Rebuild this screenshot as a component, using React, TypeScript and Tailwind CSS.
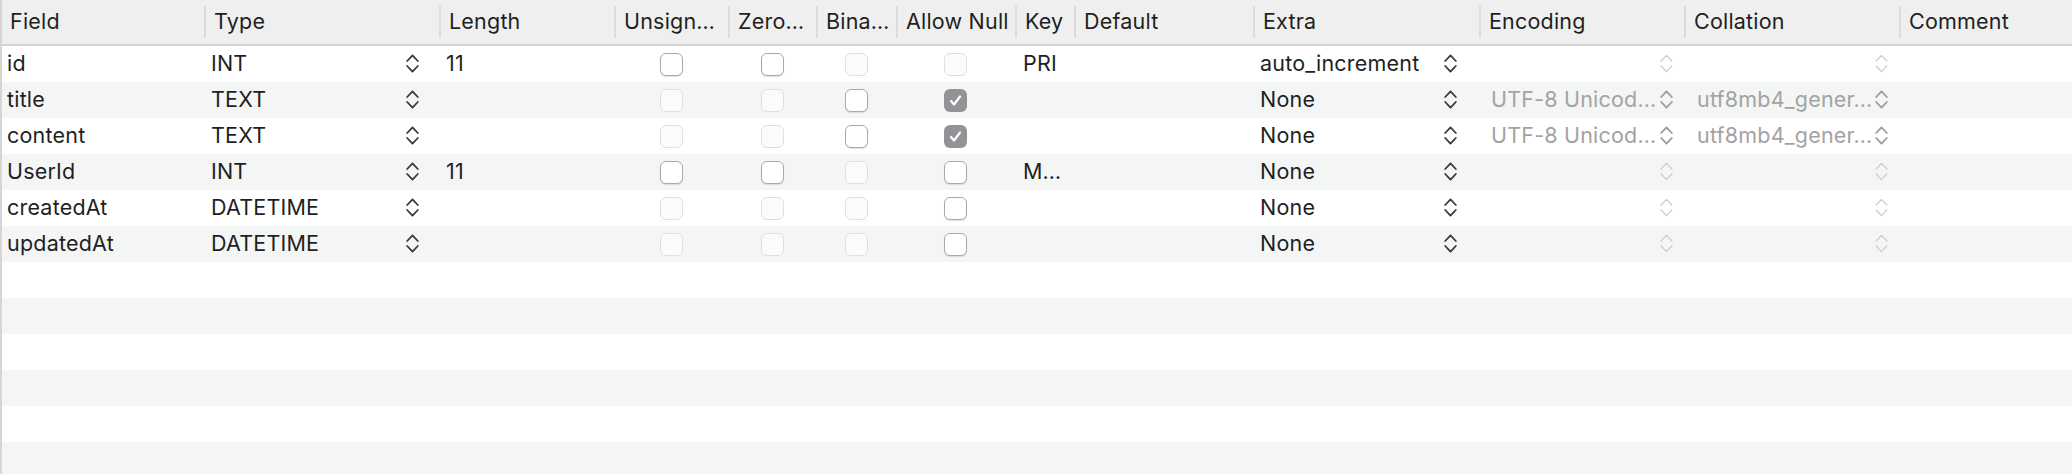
import React from 'react';

type Box = 'on' | 'off' | 'dis' | 'checked';

interface Row {
  field: string;
  type: string;
  length: string;
  unsigned: Box;
  zero: Box;
  binary: Box;
  allowNull: Box;
  key: string;
  extra: string;
  encoded: boolean;
}

const rows: Row[] = [
  { field: 'id', type: 'INT', length: '11', unsigned: 'off', zero: 'off', binary: 'dis', allowNull: 'dis', key: 'PRI', extra: 'auto_increment', encoded: false },
  { field: 'title', type: 'TEXT', length: '', unsigned: 'dis', zero: 'dis', binary: 'off', allowNull: 'checked', key: '', extra: 'None', encoded: true },
  { field: 'content', type: 'TEXT', length: '', unsigned: 'dis', zero: 'dis', binary: 'off', allowNull: 'checked', key: '', extra: 'None', encoded: true },
  { field: 'UserId', type: 'INT', length: '11', unsigned: 'off', zero: 'off', binary: 'dis', allowNull: 'off', key: 'M…', extra: 'None', encoded: false },
  { field: 'createdAt', type: 'DATETIME', length: '', unsigned: 'dis', zero: 'dis', binary: 'dis', allowNull: 'off', key: '', extra: 'None', encoded: false },
  { field: 'updatedAt', type: 'DATETIME', length: '', unsigned: 'dis', zero: 'dis', binary: 'dis', allowNull: 'off', key: '', extra: 'None', encoded: false },
];

const headers = [
  'Field', 'Type', 'Length', 'Unsign…', 'Zero…', 'Bina…', 'Allow Null',
  'Key', 'Default', 'Extra', 'Encoding', 'Collation', 'Comment',
];

const cols =
  'grid grid-cols-[202px_235px_175px_114px_88px_80px_119px_59px_179px_226px_205px_215px_173px]';

function Stepper({ tone = 'dark' }: { tone?: 'dark' | 'gray' | 'faint' }) {
  const color = tone === 'dark' ? '#3a3a3a' : tone === 'gray' ? '#9c9c9c' : '#cdcdcd';
  const width = tone === 'faint' ? 1.3 : 1.8;
  return (
    <svg width="13" height="21" viewBox="0 0 13 21" fill="none" className="shrink-0 -mt-[2px]">
      <polyline points="1.2,8 6.5,2.4 11.8,8" stroke={color} strokeWidth={width} strokeLinecap="round" strokeLinejoin="round" />
      <polyline points="1.2,13 6.5,18.6 11.8,13" stroke={color} strokeWidth={width} strokeLinecap="round" strokeLinejoin="round" />
    </svg>
  );
}

function Check({ state }: { state: Box }) {
  if (state === 'checked') {
    return (
      <div className="w-[23px] h-[23px] rounded-[6px] bg-[#929297] flex items-center justify-center">
        <svg width="15" height="15" viewBox="0 0 15 15" fill="none">
          <polyline points="3,8 6,11.5 12,3.5" stroke="white" strokeWidth="2.2" strokeLinecap="round" strokeLinejoin="round" />
        </svg>
      </div>
    );
  }
  if (state === 'dis') {
    return <div className="w-[23px] h-[23px] rounded-[6px] bg-[#fbfbfb] border border-[#dfdfdf]" />;
  }
  return (
    <div className="w-[23px] h-[23px] rounded-[6px] bg-white border border-[#a9a9a9] shadow-[0_1px_1px_rgba(0,0,0,0.12)]" />
  );
}

export default function App() {
  const empty = Array.from({ length: 6 });

  return (
    <div
      className="w-[2072px] h-[474px] overflow-hidden bg-white border-l-2 border-[#d5d5d5] text-[21.5px] tracking-[0.2px] text-[#1f1f1f]"
      style={{ fontFamily: 'Inter, "Liberation Sans", sans-serif' }}
    >
      {/* Header */}
      <div className={`${cols} h-[46px] bg-[#efefef] border-b-2 border-[#d3d3d3]`}>
        {headers.map((h, i) => (
          <div key={h} className="flex items-center h-[44px] overflow-hidden whitespace-nowrap">
            {i > 0 && <div className="w-[2px] h-[32px] bg-[#dcdcdc] shrink-0" />}
            <span className="pl-[8px] -mt-[1px]">{h}</span>
          </div>
        ))}
      </div>

      {/* Rows */}
      {rows.map((r, i) => (
        <div key={r.field} className={`${cols} h-[36px] ${i % 2 ? 'bg-[#f4f5f5]' : 'bg-white'}`}>
          <div className="flex items-center pl-[5px] pb-[2px]">{r.field}</div>
          <div className="flex items-center justify-between pl-[7px] pr-[20px]">
            <span className="pb-[2px]">{r.type}</span>
            <Stepper />
          </div>
          <div className="flex items-center pl-[7px] pb-[2px]">{r.length}</div>
          <div className="flex items-center justify-center"><Check state={r.unsigned} /></div>
          <div className="flex items-center justify-center"><Check state={r.zero} /></div>
          <div className="flex items-center justify-center"><Check state={r.binary} /></div>
          <div className="flex items-center justify-center"><Check state={r.allowNull} /></div>
          <div className="flex items-center pl-[8px] pb-[2px] whitespace-nowrap">{r.key}</div>
          <div />
          <div className="flex items-center justify-between pl-[7px] pr-[22px]">
            <span className="pb-[2px]">{r.extra}</span>
            <Stepper />
          </div>
          <div className="flex items-center justify-between pl-[12px] pr-[11px] text-[#a3a3a3] whitespace-nowrap">
            <span className="pb-[2px]">{r.encoded ? 'UTF-8 Unicod…' : ''}</span>
            <Stepper tone={r.encoded ? 'gray' : 'faint'} />
          </div>
          <div className="flex items-center justify-between pl-[13px] pr-[11px] text-[#a3a3a3] whitespace-nowrap">
            <span className="pb-[2px]">{r.encoded ? 'utf8mb4_gener…' : ''}</span>
            <Stepper tone={r.encoded ? 'gray' : 'faint'} />
          </div>
          <div />
        </div>
      ))}

      {empty.map((_, i) => (
        <div key={i} className={`h-[36px] ${(i + rows.length) % 2 ? 'bg-[#f4f5f5]' : 'bg-white'}`} />
      ))}
    </div>
  );
}
